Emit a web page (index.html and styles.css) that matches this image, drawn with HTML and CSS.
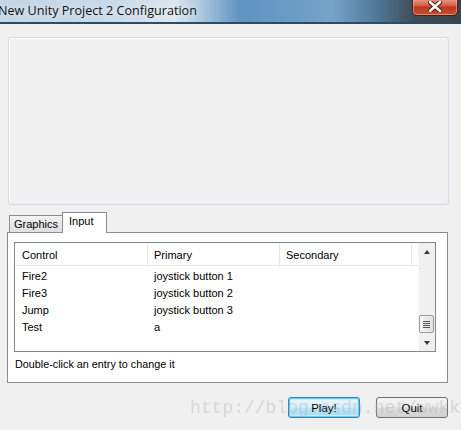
FILE: index.html
```html
<!DOCTYPE html>
<html lang="en">
<head>
  <meta charset="UTF-8">
  <title>New Unity Project 2 Configuration</title>
  <link rel="stylesheet" href="styles.css">
</head>
<body>
<div class="window">
  <div class="titlebar">
    <span class="title">New Unity Project 2 Configuration</span>
    <div class="close-btn">
      <svg width="14" height="11" viewBox="0 0 14 11">
        <path d="M2 1 L12 10 M12 1 L2 10" stroke="#4a1a10" stroke-width="4.5" stroke-linecap="round"/>
        <path d="M2 1 L12 10 M12 1 L2 10" stroke="#ffffff" stroke-width="2.5" stroke-linecap="round"/>
      </svg>
    </div>
  </div>

  <div class="banner"></div>

  <div class="tabs">
    <div class="tab">Graphics</div>
    <div class="tab active">Input</div>
  </div>

  <div class="tab-panel">
    <div class="list">
      <div class="list-body">
        <div class="header">
          <div class="col c1">Control</div>
          <div class="col c2">Primary</div>
          <div class="col c3">Secondary</div>
          <div class="col c4"></div>
        </div>
        <!-- input bindings -->
        <div class="row"><span class="c1">Fire2</span><span class="c2">joystick button 1</span></div>
        <div class="row"><span class="c1">Fire3</span><span class="c2">joystick button 2</span></div>
        <div class="row"><span class="c1">Jump</span><span class="c2">joystick button 3</span></div>
        <div class="row"><span class="c1">Test</span><span class="c2">a</span></div>
      </div>
      <div class="scrollbar">
        <div class="arrow up"></div>
        <div class="track">
          <div class="thumb"><span></span><span></span><span></span><span></span></div>
        </div>
        <div class="arrow down"></div>
      </div>
    </div>
    <div class="status">Double-click an entry to change it</div>
  </div>

  <div class="buttons">
    <button class="btn default">Play!</button>
    <button class="btn">Quit</button>
  </div>

  <div class="watermark">http://blog.csdn.net/wwkk</div>
</div>
</body>
</html>
```

FILE: styles.css
```css
body {
  margin: 0;
  background: #f0f0f0;
  font-family: 'Liberation Sans', Arial, sans-serif;
  font-size: 11px;
  color: #000;
  overflow: hidden;
}

.window {
  position: relative;
  width: 461px;
  height: 430px;
}

.titlebar {
  position: relative;
  height: 22px;
  border-bottom: 2px solid #2d4b62;
  background: linear-gradient(to right, #c3d5e6 0%, #c9dae9 25%, #dce6ef 38%, #a9c5de 44%, #5f93c0 52%, #6b9dc7 65%, #76a4c9 72%, #4e7696 82%, #3f4b55 90%, #3a434b 100%);
}

.title {
  position: absolute;
  left: -2px;
  top: 2px;
  font-family: 'Open Sans', sans-serif;
  font-size: 12.6px;
  color: #111;
  text-shadow: 0 0 6px rgba(255, 255, 255, 0.8);
}

.close-btn {
  position: absolute;
  right: 3px;
  top: -2px;
  width: 44px;
  height: 17px;
  border: 1px solid #4a1e14;
  border-top: none;
  border-radius: 0 0 5px 5px;
  background: linear-gradient(#e7a48f 0%, #d56a4f 40%, #bb3a22 55%, #c84d30 100%);
  box-shadow: inset 0 0 0 1px rgba(255, 200, 180, 0.5);
  display: flex;
  align-items: center;
  justify-content: center;
}

.banner {
  margin: 13px 12px 0 8px;
  height: 166px;
  border: 1px solid #cfdbe6;
  border-radius: 3px;
  box-shadow: inset 1px 1px 0 #fff;
  background: #f0f0f0;
}

.tabs {
  display: flex;
  align-items: flex-end;
  margin: 6px 0 0 9px;
  height: 21px;
}

.tab {
  height: 16px;
  padding: 0 4px;
  border: 1px solid #898c95;
  border-bottom: none;
  background: linear-gradient(#f2f2f2, #e0e0e0);
  line-height: 17px;
  font-size: 11px;
}

.tab.active {
  height: 20px;
  margin-left: -1px;
  padding: 0 12px 0 6px;
  background: #fff;
  line-height: 17px;
  position: relative;
  top: 1px;
}

.tab-panel {
  margin-left: 7px;
  width: 433px;
  height: 140px;
  border: 1px solid #898c95;
  background: #fff;
  padding: 9px 0 0 6px;
}

.list {
  display: flex;
  width: 420px;
  height: 108px;
  border: 1px solid #828790;
  background: #fff;
}

.list-body {
  flex: 1;
}

.header {
  display: flex;
  height: 22px;
  border-bottom: 1px solid #e5e5e5;
  background: linear-gradient(#ffffff, #fdfdfd);
}

.col {
  line-height: 24px;
  padding-left: 6px;
  border-right: 1px solid #e5e5e5;
  box-sizing: border-box;
}

.col.c1 { width: 133px; padding-left: 7px; }
.col.c2 { width: 132px; }
.col.c3 { width: 132px; }
.col.c4 { flex: 1; border-right: none; }

.row {
  display: flex;
  height: 17px;
  line-height: 17px;
}

.header + .row { margin-top: 2px; }

.row .c1 { width: 133px; padding-left: 7px; box-sizing: border-box; }
.row .c2 { padding-left: 6px; }

.scrollbar {
  width: 17px;
  display: flex;
  flex-direction: column;
  background: #f0f0f0;
  border-left: 1px solid #f7f7f7;
}

.arrow {
  height: 17px;
  display: flex;
  align-items: center;
  justify-content: center;
}

.arrow::after {
  content: "";
  width: 0;
  height: 0;
  border-left: 3.5px solid transparent;
  border-right: 3.5px solid transparent;
}

.arrow.up::after { border-bottom: 4px solid #3a3a3a; }
.arrow.down::after { border-top: 4px solid #3a3a3a; }

.track {
  flex: 1;
  display: flex;
  flex-direction: column;
  justify-content: flex-end;
}

.thumb {
  height: 16px;
  margin: 0 1px 1px 0;
  border: 1px solid #9b9b9b;
  border-radius: 2px;
  background: linear-gradient(to right, #f4f4f4, #e2e2e2);
  display: flex;
  flex-direction: column;
  align-items: center;
  justify-content: center;
  gap: 1px;
}

.thumb span {
  width: 7px;
  height: 1px;
  background: #555;
}

.status {
  margin-top: 6px;
  margin-left: 1px;
  font-size: 10.8px;
}

.buttons {
  display: flex;
  justify-content: flex-end;
  gap: 16px;
  margin: 14px 13px 0 0;
}

.btn {
  width: 72px;
  height: 21px;
  border: 1px solid #707070;
  border-radius: 3px;
  background: linear-gradient(#f4f4f4 0%, #ececec 48%, #dcdcdc 52%, #d2d2d2 100%);
  font-family: 'Liberation Sans', Arial, sans-serif;
  font-size: 11.5px;
  padding: 0;
  color: #000;
}

.btn.default {
  border-color: #3c7fb1;
  box-shadow: inset 0 0 0 1px #62d0f6, inset 0 0 0 2px #bfeefe;
  background: linear-gradient(#eaf6fd 0%, #d9f0fc 48%, #bee6fd 52%, #a7d9f5 100%);
}

.watermark {
  position: absolute;
  left: 190px;
  top: 398px;
  font-family: 'Liberation Mono', 'Courier New', monospace;
  font-size: 18px;
  color: rgba(175, 175, 175, 0.4);
  pointer-events: none;
}
```
